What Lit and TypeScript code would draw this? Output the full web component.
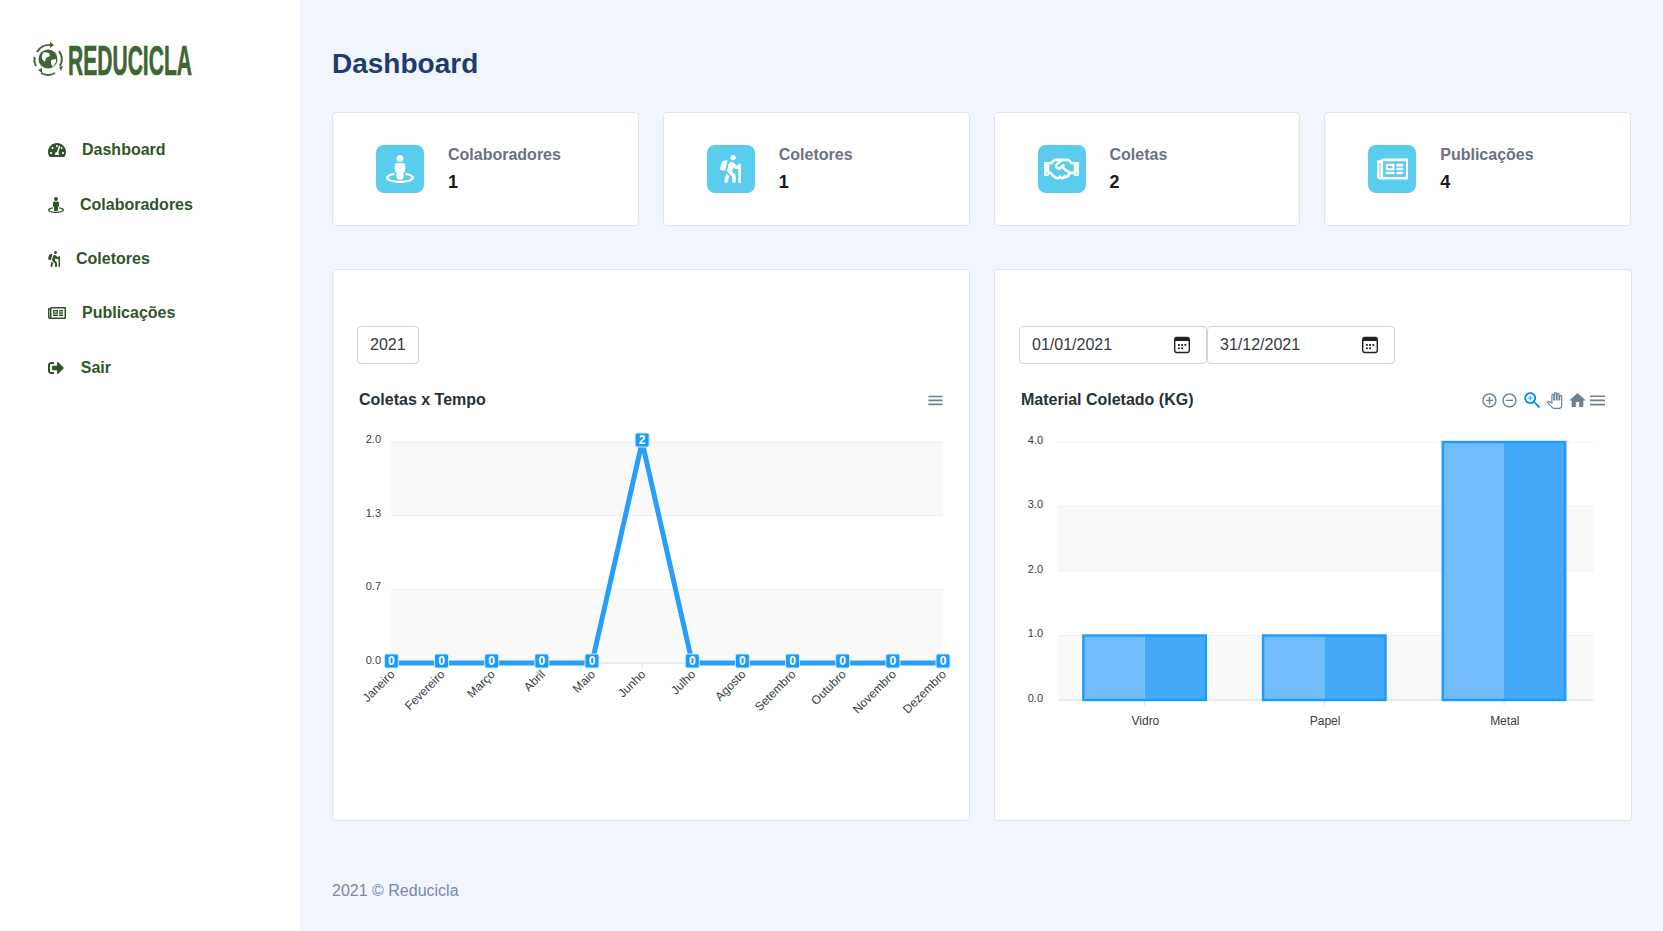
import { LitElement, html, css, svg } from 'lit';
import { customElement } from 'lit/decorators.js';

const ICONS: Record<string, [number, string]> = {
  tachometer: [576, 'M288 32C128.94 32 0 160.94 0 320c0 52.8 14.25 102.26 39.06 144.8 5.61 9.62 16.3 15.2 27.44 15.2h443c11.14 0 21.83-5.58 27.44-15.2C561.75 422.26 576 372.8 576 320c0-159.06-128.94-288-288-288zm0 64c14.71 0 26.58 10.13 30.32 23.65-1.11 2.26-2.64 4.23-3.45 6.67l-9.22 27.67c-5.13 3.49-10.97 6.01-17.64 6.01-17.67 0-32-14.33-32-32S270.33 96 288 96zM96 384c-17.67 0-32-14.33-32-32s14.33-32 32-32 32 14.33 32 32-14.33 32-32 32zm48-160c-17.67 0-32-14.33-32-32s14.33-32 32-32 32 14.33 32 32-14.33 32-32 32zm246.77-72.41l-61.33 184C343.13 347.33 352 364.54 352 384c0 11.72-3.38 22.55-8.88 32H232.88c-5.5-9.45-8.88-20.28-8.88-32 0-33.94 26.5-61.43 59.9-63.59l61.34-184.01c4.17-12.56 17.73-19.45 30.36-15.17 12.57 4.19 19.35 17.77 15.17 30.36zm14.66 57.2l15.52-46.55c3.47-1.29 7.13-2.23 11.05-2.23 17.67 0 32 14.33 32 32s-14.33 32-32 32c-11.38-.01-20.89-6.28-26.57-15.22zM480 384c-17.67 0-32-14.33-32-32s14.33-32 32-32 32 14.33 32 32-14.33 32-32 32z'],
  street: [512, 'M367.9 329.76c-4.62 5.3-9.78 10.1-15.9 13.65v22.94c66.52 9.34 112 28.05 112 49.65 0 30.93-93.12 56-208 56S48 446.93 48 416c0-21.6 45.48-40.3 112-49.65v-22.94c-6.12-3.55-11.28-8.35-15.9-13.65C58.87 345.34 0 378.05 0 416c0 53.02 114.62 96 256 96s256-42.98 256-96c0-37.95-58.87-70.66-144.1-86.24zM256 128c35.35 0 64-28.65 64-64S291.35 0 256 0s-64 28.65-64 64 28.65 64 64 64zm-64 192v96c0 17.67 14.33 32 32 32h64c17.67 0 32-14.33 32-32v-96c17.67 0 32-14.33 32-32v-96c0-26.51-21.49-48-48-48h-11.8c-11.07 5.03-23.26 8-36.2 8s-25.13-2.97-36.2-8H208c-26.51 0-48 21.49-48 48v96c0 17.67 14.33 32 32 32z'],
  hiking: [384, 'M80.95 472.23c-4.28 17.16 6.14 34.53 23.28 38.81 2.61.66 5.22.95 7.8.95 14.33 0 27.37-9.7 31.02-24.23l25.24-100.97-52.78-52.78-34.56 138.22zm14.89-196.12L137 117c2.19-8.42-3.14-16.95-11.92-19.06-43.88-10.52-88.35 15.07-99.32 57.17L.49 253.24c-2.19 8.42 3.14 16.95 11.92 19.06l63.56 15.25c8.79 2.1 17.68-3.02 19.87-11.44zM368 160h-16c-8.84 0-16 7.16-16 16v16h-34.75l-46.78-46.78C243.38 134.11 228.61 128 212.91 128c-27.02 0-50.47 18.3-57.03 44.52l-26.92 107.72a32.012 32.012 0 0 0 8.42 30.39L224 397.25V480c0 17.67 14.33 32 32 32s32-14.33 32-32v-82.75c0-17.09-6.66-33.16-18.75-45.25l-46.82-46.82c.15-.5.49-.89.62-1.41l19.89-79.57 22.43 22.43c6.05 6.05 14.08 9.38 22.62 9.38h48v240c0 8.84 7.16 16 16 16h16c8.84 0 16-7.16 16-16V176c.01-8.84-7.15-16-16-16zM240 96c26.51 0 48-21.49 48-48S266.51 0 240 0s-48 21.49-48 48 21.49 48 48 48z'],
  newspaper: [576, 'M552 64H112c-20.858 0-38.643 13.377-45.248 32H24c-13.255 0-24 10.745-24 24v272c0 30.928 25.072 56 56 56h496c13.255 0 24-10.745 24-24V88c0-13.255-10.745-24-24-24zM48 392V144h16v248c0 4.411-3.589 8-8 8s-8-3.589-8-8zm480 8H111.422c.374-2.614.578-5.283.578-8V112h416v288zM172 280h136c6.627 0 12-5.373 12-12v-96c0-6.627-5.373-12-12-12H172c-6.627 0-12 5.373-12 12v96c0 6.627 5.373 12 12 12zm28-80h80v40h-80v-40zm-40 140v-24c0-6.627 5.373-12 12-12h136c6.627 0 12 5.373 12 12v24c0 6.627-5.373 12-12 12H172c-6.627 0-12-5.373-12-12zm192 0v-24c0-6.627 5.373-12 12-12h104c6.627 0 12 5.373 12 12v24c0 6.627-5.373 12-12 12H364c-6.627 0-12-5.373-12-12zm0-144v-24c0-6.627 5.373-12 12-12h104c6.627 0 12 5.373 12 12v24c0 6.627-5.373 12-12 12H364c-6.627 0-12-5.373-12-12zm0 72v-24c0-6.627 5.373-12 12-12h104c6.627 0 12 5.373 12 12v24c0 6.627-5.373 12-12 12H364c-6.627 0-12-5.373-12-12z'],
  handshake: [640, 'M519.2 127.9l-47.6-47.6A56.252 56.252 0 0 0 432 64H205.2c-14.8 0-29.1 5.9-39.6 16.3L118 127.9H0v255.7h64c17.6 0 31.8-14.2 31.9-31.7h9.1l84.6 76.4c30.9 25.1 73.8 25.7 105.6 3.8 12.5 10.8 26 15.9 41.1 15.9 18.2 0 35.3-7.4 48.8-24 22.1 8.7 48.2 2.6 64-16.8l26.2-32.3c5.6-6.9 9.1-14.8 10.9-23h57.9c.1 17.5 14.4 31.7 31.9 31.7h64V127.9H519.2zM48 351.6c-8.8 0-16-7.2-16-16s7.2-16 16-16 16 7.2 16 16c0 8.9-7.2 16-16 16zm390-6.9l-26.1 32.2c-2.8 3.4-7.8 4-11.3 1.2l-23.9-19.4-30 36.5c-6 7.3-15 4.8-18 2.4l-36.8-31.5-15.6 19.2c-13.9 17.1-39.2 19.7-55.3 6.6l-97.3-88H96V175.8h41.9l61.7-61.6c2-.8 3.7-1.5 5.7-2.3H262l-38.7 35.5c-29.4 26.9-31.1 72.3-4.4 101.3 14.8 16.2 61.2 41.2 101.5 4.4l8.2-7.5 108.2 87.8c3.4 2.8 3.9 7.9 1.2 11.3zm106-40.8h-69.2c-2.3-2.8-4.9-5.4-7.7-7.7l-102.7-83.4 12.5-11.4c6.5-6 7-16.1 1-22.6L367 167.1c-6-6.5-16.1-6.9-22.6-1l-55.2 50.6c-9.5 8.7-25.7 9.4-34.6 0-9.3-9.9-8.5-25.1 1.2-33.9l65.6-60.1c7.4-6.8 17-10.5 27-10.5l83.7-.2c2.1 0 4.1.8 5.5 2.3l61.7 61.6H544v128zm48 47.7c-8.8 0-16-7.2-16-16s7.2-16 16-16 16 7.2 16 16c0 8.9-7.2 16-16 16z'],
  signout: [536, 'M497 273L329 441c-15 15-41 4.5-41-17v-96H152c-13.3 0-24-10.7-24-24v-96c0-13.3 10.7-24 24-24h136V88c0-21.4 25.9-32 41-17l168 168c9.3 9.4 9.3 24.6 0 34zM192 436v-40c0-6.6-5.4-12-12-12H96c-17.7 0-32-14.3-32-32V160c0-17.7 14.3-32 32-32h84c6.6 0 12-5.4 12-12V76c0-6.6-5.4-12-12-12H96c-53 0-96 43-96 96v192c0 53 43 96 96 96h84c6.6 0 12-5.4 12-12z'],
};

const NAV = [
  ['tachometer', 'Dashboard'],
  ['street', 'Colaboradores'],
  ['hiking', 'Coletores'],
  ['newspaper', 'Publicações'],
  ['signout', 'Sair'],
];

const STATS = [
  ['street', 'Colaboradores', '1'],
  ['hiking', 'Coletores', '1'],
  ['handshake', 'Coletas', '2'],
  ['newspaper', 'Publicações', '4'],
];

const MONTHS = ['Janeiro', 'Fevereiro', 'Março', 'Abril', 'Maio', 'Junho', 'Julho', 'Agosto', 'Setembro', 'Outubro', 'Novembro', 'Dezembro'];
const COLETAS = [0, 0, 0, 0, 0, 2, 0, 0, 0, 0, 0, 0];

const MENU = 'M3 18h18v-2H3v2zm0-5h18v-2H3v2zm0-7v2h18V6H3z';
const ZOOM_IN = 'M13 7h-2v4H7v2h4v4h2v-4h4v-2h-4V7zm-1-5C6.48 2 2 6.48 2 12s4.48 10 10 10 10-4.48 10-10S17.52 2 12 2zm0 18c-4.41 0-8-3.59-8-8s3.59-8 8-8 8 3.59 8 8-3.59 8-8 8z';
const ZOOM_OUT = 'M7 11v2h10v-2H7zm5-9C6.48 2 2 6.48 2 12s4.48 10 10 10 10-4.48 10-10S17.52 2 12 2zm0 18c-4.41 0-8-3.59-8-8s3.59-8 8-8 8 3.59 8 8-3.59 8-8 8z';
const ZOOM = 'M15.5 14h-.79l-.28-.27C15.41 12.59 16 11.11 16 9.5 16 5.91 13.09 3 9.5 3S3 5.91 3 9.5 5.91 16 9.5 16c1.61 0 3.09-.59 4.23-1.57l.27.28v.79l5 4.99L20.49 19l-4.99-5zm-6 0C7.01 14 5 11.99 5 9.5S7.01 5 9.5 5 14 7.01 14 9.5 11.99 14 9.5 14zM12 10h-2v2H9v-2H7V9h2V7h1v2h2v1z';
const HAND = 'M23 5.5V20c0 2.2-1.8 4-4 4h-7.3c-1.08 0-2.1-.43-2.85-1.19L1 14.83s1.26-1.23 1.3-1.25c.22-.19.49-.29.79-.29.22 0 .42.06.6.16.04.01 4.31 2.46 4.31 2.46V4c0-.83.67-1.5 1.5-1.5S11 3.17 11 4v7h1V1.5c0-.83.67-1.5 1.5-1.5S15 .67 15 1.5V11h1V2.5c0-.83.67-1.5 1.5-1.5s1.5.67 1.5 1.5V11h1V5.5c0-.83.67-1.5 1.5-1.5s1.5.67 1.5 1.5z';
const HOME = 'M10 20v-6h4v6h5v-8h3L12 3 2 12h3v8z';

const fa = (name: string, size: number) => {
  const [w, d] = ICONS[name];
  return html`<svg class="fa" viewBox="0 0 ${w} 512" width=${(w / 512) * size} height=${size}><path d=${d}></path></svg>`;
};

const toolIcon = (d: string, cx: number, cy: number, size: number, cls = 'tool') =>
  svg`<svg class=${cls} x=${cx - size / 2} y=${cy - size / 2} width=${size} height=${size} viewBox="0 0 24 24"><path d=${d}></path></svg>`;

const calendar = html`<svg class="cal" viewBox="0 0 18 18" width="18" height="18">
  <rect x="1.700" y="1.500" width="14.600" height="15" rx="2.200" fill="none" stroke="#222" stroke-width="1.400"></rect>
  <rect x="2" y="2" width="14" height="3" fill="#222"></rect>
  <g fill="#222">
    <rect x="5" y="8" width="1.800" height="1.800"></rect><rect x="8.200" y="8" width="1.800" height="1.800"></rect><rect x="11.400" y="8" width="1.800" height="1.800"></rect>
    <rect x="5" y="11.400" width="1.800" height="1.800"></rect><rect x="8.200" y="11.400" width="1.800" height="1.800"></rect>
  </g>
</svg>`;

const grid = (x0: number, x1: number, top: number, bottom: number, rows: number, firstGrey: boolean) => {
  const h = (bottom - top) / rows;
  const out = [];
  for (let i = 0; i < rows; i++) {
    const grey = firstGrey ? i % 2 === 0 : i % 2 === 1;
    if (grey) out.push(svg`<rect x=${x0} y=${top + i * h} width=${x1 - x0} height=${h} fill="#f9f9f9"></rect>`);
  }
  for (let i = 0; i < rows; i++) {
    out.push(svg`<line x1=${x0} x2=${x1} y1=${top + i * h} y2=${top + i * h} stroke="#efefef"></line>`);
  }
  out.push(svg`<line x1=${x0} x2=${x1} y1=${bottom} y2=${bottom} stroke="#e4e4e4" stroke-width="1.500"></line>`);
  return out;
};

const lineChart = () => {
  const x0 = 34.4, x1 = 586, top = 57, bottom = 278;
  const step = (x1 - x0) / 11;
  const px = (i: number) => x0 + i * step;
  const py = (v: number) => bottom - (v / 2) * (bottom - top);
  const pts = COLETAS.map((v, i) => `${px(i)},${py(v)}`).join(' ');
  const yLabels = ['2.0', '1.3', '0.7', '0.0'];
  return html`<svg class="chart" viewBox="0 0 588 336" width="588" height="336">
    <text class="title" x="2" y="20">Coletas x Tempo</text>
    ${toolIcon(MENU, 578.5, 15.4, 19)}
    ${grid(x0, x1, top, bottom, 3, true)}
    ${yLabels.map((t, i) => svg`<text class="tick" x="24" text-anchor="end" y=${top + (i * (bottom - top)) / 3 + 1}>${t}</text>`)}
    ${MONTHS.map((_, i) => svg`<line x1=${px(i)} x2=${px(i)} y1=${bottom} y2=${bottom + 6} stroke="#e4e4e4"></line>`)}
    <polyline points=${pts} fill="none" stroke="#269ffc" stroke-width="5"></polyline>
    ${MONTHS.map((m, i) => svg`<text class="xtick" text-anchor="end" transform="translate(${px(i) + 4} ${bottom + 12}) rotate(-45)">${m}</text>`)}
    ${COLETAS.map((v, i) => svg`<g>
      <rect x=${px(i) - 7} y=${py(v) - 9} width="14" height="14" rx="2" fill="#1a9bfb" stroke="#cfe9fe"></rect>
      <text class="dl" x=${px(i)} y=${py(v) + 2} text-anchor="middle">${v}</text>
    </g>`)}
  </svg>`;
};

const barChart = () => {
  const x0 = 38.9, x1 = 574.5, top = 57, bottom = 315;
  const bars = [
    ['Vidro', 1],
    ['Papel', 1],
    ['Metal', 4],
  ] as [string, number][];
  const bw = 122.5;
  const yLabels = ['4.0', '3.0', '2.0', '1.0', '0.0'];
  return html`<svg class="chart" viewBox="0 0 588 336" width="588" height="336">
    <text class="title" x="2" y="20">Material Coletado (KG)</text>
    ${toolIcon(ZOOM_IN, 470.5, 15.4, 17)}
    ${toolIcon(ZOOM_OUT, 490.5, 15.4, 17)}
    ${toolIcon(ZOOM, 513.5, 15.4, 22, 'tool on')}
    <svg class="hand" x="527" y="7" width="17" height="17" viewBox="-1 -1 26 26"><path d=${HAND}></path></svg>
    ${toolIcon(HOME, 558.5, 15.4, 20)}
    ${toolIcon(MENU, 578.5, 15.4, 20)}
    ${grid(x0, x1, top, bottom, 4, false)}
    ${yLabels.map((t, i) => svg`<text class="tick" x="24" text-anchor="end" y=${top + (i * (bottom - top)) / 4 + 1.5}>${t}</text>`)}
    ${bars.map(([name, v], i) => {
      const cx = 125.6 + i * 179.7;
      const y = bottom - (v / 4) * (bottom - top);
      return svg`<g>
        <line x1=${cx} x2=${cx} y1=${bottom} y2=${bottom + 6} stroke="#e4e4e4"></line>
        <rect x=${cx - bw / 2} y=${y} width=${bw / 2} height=${bottom - y} fill="#71bdfb"></rect>
        <rect x=${cx} y=${y} width=${bw / 2} height=${bottom - y} fill="#44a9fb"></rect>
        <rect x=${cx - bw / 2} y=${y} width=${bw} height=${bottom - y} fill="none" stroke="#1a9bfe" stroke-width="2.400"></rect>
        <text class="xtick" x=${cx + 0.8} y=${bottom + 24.5} text-anchor="middle">${name}</text>
      </g>`;
    })}
  </svg>`;
};

@customElement('app-root')
export class AppRoot extends LitElement {
  static styles = css`
    :host {
      display: flex;
      min-height: 931px;
      font-family: 'Liberation Sans', Arial, sans-serif;
      background: #f1f5fd;
    }
    .sidebar {
      width: 300px;
      flex: none;
      background: #fff;
      box-sizing: border-box;
      padding-top: 40px;
    }
    .logo {
      display: block;
      margin-left: 32px;
    }
    .logo text {
      font-family: 'Liberation Sans Narrow', 'Liberation Sans', sans-serif;
      font-weight: 700;
      font-size: 42px;
      fill: #3f6535;
      stroke: #3f6535;
      stroke-width: 0.7;
    }
    nav {
      margin-top: 43px;
      padding-left: 48px;
    }
    .nav-item {
      display: flex;
      align-items: center;
      gap: 16px;
      height: 54.4px;
      color: #30552a;
      font-size: 16px;
      font-weight: 700;
    }
    .fa {
      display: block;
      fill: currentColor;
    }
    main {
      flex: 1;
      min-width: 0;
      padding: 44px 32px 0;
    }
    h1 {
      margin: 0;
      font-size: 28px;
      line-height: 40px;
      font-weight: 700;
      color: #1f3b70;
    }
    .stats {
      display: grid;
      grid-template-columns: repeat(4, 1fr);
      gap: 24px;
      margin-top: 28px;
    }
    .card {
      background: #fff;
      border: 1px solid #dfe4ee;
      border-radius: 4px;
      box-sizing: border-box;
    }
    .stat {
      display: flex;
      align-items: center;
      gap: 24px;
      height: 114px;
      padding-left: 43px;
    }
    .stat-icon {
      width: 48px;
      height: 48px;
      border-radius: 8px;
      background: #5accee;
      color: #fff;
      display: flex;
      align-items: center;
      justify-content: center;
    }
    .stat-text {
      padding-bottom: 2px;
    }
    .stat-label {
      font-size: 16px;
      font-weight: 700;
      line-height: 20px;
      color: #6c727f;
    }
    .stat-value {
      font-size: 18px;
      font-weight: 700;
      line-height: 20px;
      margin-top: 7px;
      color: #1a1a1a;
    }
    .charts {
      display: grid;
      grid-template-columns: repeat(2, 1fr);
      gap: 24px;
      margin-top: 43px;
    }
    .chart-card {
      height: 552px;
      padding: 56px 24px 0;
    }
    .filters {
      display: flex;
      height: 38px;
    }
    .control {
      display: flex;
      align-items: center;
      justify-content: space-between;
      box-sizing: border-box;
      height: 38px;
      padding: 0 12px;
      border: 1px solid #ced4da;
      border-radius: 4px;
      font-size: 16px;
      color: #333a42;
      background: #fff;
    }
    .date {
      width: 188px;
      padding-right: 15px;
    }
    .chart {
      display: block;
      margin-top: 21px;
      overflow: visible;
    }
    .chart .title {
      font-size: 16px;
      font-weight: 700;
      fill: #263238;
    }
    .chart .tick {
      font-size: 11px;
      fill: #373d3f;
    }
    .chart .xtick {
      font-size: 12px;
      fill: #373d3f;
    }
    .chart .dl {
      font-size: 12px;
      font-weight: 700;
      fill: #fff;
    }
    .tool {
      fill: #6e8192;
    }
    .tool.on {
      fill: #008ffb;
    }
    .hand {
      fill: #fff;
      stroke: #6e8192;
      stroke-width: 1.8;
    }
    footer {
      margin-top: 60px;
      font-size: 16px;
      line-height: 20px;
      color: #7a88ad;
    }
  `;

  render() {
    return html`
      <aside class="sidebar">
        <svg class="logo" width="268" height="40" viewBox="32 40 268 40">
          <g fill="none" stroke="#3f6535" stroke-width="2">
            <path d="M37 52a14 14 0 0 1 14-7"></path>
            <path d="M59 51a14 14 0 0 1 1 15"></path>
            <path d="M55 73a14 14 0 0 1-14 0"></path>
            <path d="M36 66a14 14 0 0 1-1.500-9"></path>
          </g>
          <path d="M50 42l4 3-4 3zM59 67l2 4 2-5zM38 70l4 3 0-5z" fill="#3f6535"></path>
          <circle cx="48" cy="59" r="9.500" fill="#3f6535"></circle>
          <path d="M44 52l5 1 1 3-4 2-1 4-3-3 0-4zM51 60l5-1 0 3-3 5-2-3z" fill="#fff"></path>
          <text x="68" y="75" textLength="124" lengthAdjust="spacingAndGlyphs">REDUCICLA</text>
        </svg>
        <nav>
          ${NAV.map(([icon, label]) => html`<div class="nav-item">${fa(icon, 16)}<span>${label}</span></div>`)}
        </nav>
      </aside>
      <main>
        <h1>Dashboard</h1>
        <section class="stats">
          ${STATS.map(([icon, label, value]) => html`
            <div class="card stat">
              <div class="stat-icon">${fa(icon, 28)}</div>
              <div class="stat-text">
                <div class="stat-label">${label}</div>
                <div class="stat-value">${value}</div>
              </div>
            </div>`)}
        </section>
        <section class="charts">
          <div class="card chart-card">
            <div class="filters"><div class="control">2021</div></div>
            ${lineChart()}
          </div>
          <div class="card chart-card">
            <div class="filters">
              <div class="control date">01/01/2021${calendar}</div>
              <div class="control date">31/12/2021${calendar}</div>
            </div>
            ${barChart()}
          </div>
        </section>
        <footer>2021 © Reducicla</footer>
      </main>
    `;
  }
}
